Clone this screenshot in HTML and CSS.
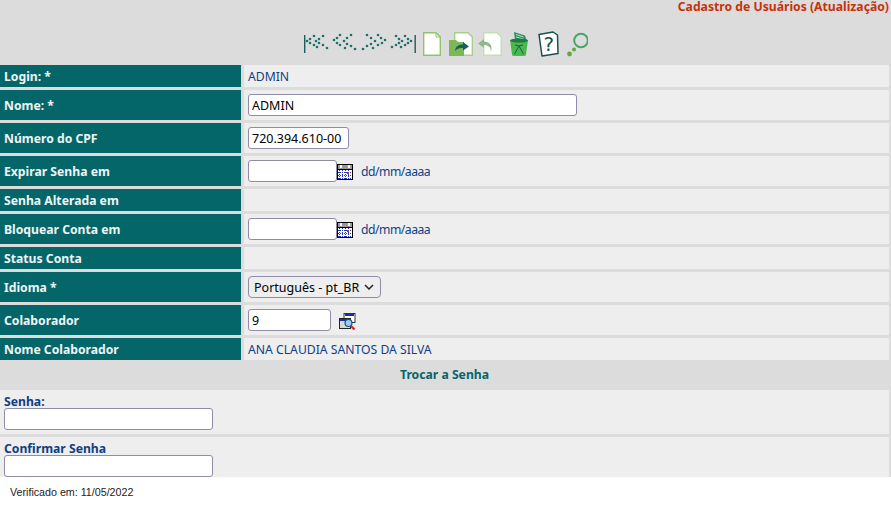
FILE: index.html
```html
<!DOCTYPE html>
<html lang="pt-BR">
<head>
    <meta charset="UTF-8">
    <title>Cadastro de Usuários</title>
    <link rel="stylesheet" href="styles.css">
</head>
<body>

  <div class="page">
    <header class="top">
        <div class="page-title">Cadastro de Usuários (Atualização)</div>
        <div class="toolbar">
            <svg width="115" height="28" viewBox="0 0 115 28">
                <rect x="0" y="5" width="1.4" height="18" fill="#1a5f5c"/>
                <g fill="#1f6f6a">
                    <circle cx="10" cy="6" r="1.3"/><circle cx="6" cy="9" r="1.3"/><circle cx="3" cy="11" r="1.3"/><circle cx="6" cy="13" r="1.3"/><circle cx="10" cy="15" r="1.3"/><circle cx="13" cy="17" r="1.3"/>
                    <circle cx="19" cy="6" r="1.3"/><circle cx="15" cy="9" r="1.3"/><circle cx="12" cy="11" r="1.3"/><circle cx="15" cy="13" r="1.3"/><circle cx="19" cy="15" r="1.3"/><circle cx="23" cy="18" r="1.3"/>
                    <circle cx="36" cy="5" r="1.3"/><circle cx="33" cy="8" r="1.3"/><circle cx="30" cy="10" r="1.3"/><circle cx="33" cy="13" r="1.3"/><circle cx="36" cy="15" r="1.3"/><circle cx="41" cy="18" r="1.3"/>
                    <circle cx="47" cy="5" r="1.3"/><circle cx="43" cy="8" r="1.3"/><circle cx="40" cy="11" r="1.3"/><circle cx="43" cy="14" r="1.3"/><circle cx="47" cy="16" r="1.3"/><circle cx="51" cy="19" r="1.3"/>
                    <circle cx="59" cy="19" r="1.3"/><circle cx="63" cy="16" r="1.3"/><circle cx="67" cy="14" r="1.3"/><circle cx="71" cy="11" r="1.3"/><circle cx="67" cy="8" r="1.3"/><circle cx="63" cy="5" r="1.3"/>
                    <circle cx="69" cy="18" r="1.3"/><circle cx="74" cy="15" r="1.3"/><circle cx="78" cy="13" r="1.3"/><circle cx="81" cy="10" r="1.3"/><circle cx="77" cy="8" r="1.3"/><circle cx="74" cy="5" r="1.3"/>
                    <circle cx="88" cy="17" r="1.3"/><circle cx="92" cy="15" r="1.3"/><circle cx="95" cy="13" r="1.3"/><circle cx="98" cy="11" r="1.3"/><circle cx="95" cy="9" r="1.3"/><circle cx="92" cy="6" r="1.3"/>
                    <circle cx="97" cy="17" r="1.3"/><circle cx="101" cy="15" r="1.3"/><circle cx="104" cy="13" r="1.3"/><circle cx="107" cy="11" r="1.3"/><circle cx="104" cy="9" r="1.3"/><circle cx="101" cy="6" r="1.3"/>
                </g>
                <rect x="110.5" y="5" width="1.4" height="18" fill="#1a5f5c"/>
            </svg>
            <svg width="22" height="28" viewBox="0 0 22 28">
                <path d="M.7 2.7H13L17.3 7V25.3H.7Z" fill="#fff" stroke="#8fc46a" stroke-width="1.4"/>
                <path d="M13 2.7V7H17.3" fill="none" stroke="#8fc46a"/>
            </svg>
            <svg width="24" height="28" viewBox="0 0 24 28">
                <path d="M5.7 2.7H19L23.3 7V25.3H5.700Z" fill="#fff" stroke="#a6d088" stroke-width="1.4"/>
                <path d="M0 10H7L9 12H15V26H0Z" fill="#7cb858"/>
                <path d="M6 21C6.500 16 10 14.500 14 14.500V12L20 16.500L14 20.500V18C11 18 8 18.500 6 21Z" fill="#17605c"/>
            </svg>
            <svg width="28" height="28" viewBox="0 0 28 28">
                <path d="M6.700 2.700H20L24.300 7V25.300H6.700Z" fill="#fff" stroke="#c3dfae" stroke-width="1.400"/>
                <path d="M14 22C14 17 11 15 7 15V18L1 13.500L7 9V11.500C12 11.500 16 15 14 22Z" fill="#8fb98a"/>
            </svg>
            <svg width="25" height="28" viewBox="0 0 25 28">
                <path d="M5 2L16 5.500L17.500 10H6Z" fill="#2f8f6a"/>
                <path d="M7 4.500L14.500 7M7 7L15.500 9.500" stroke="#bfe2b5" stroke-width="1"/>
                <path d="M1 10H19L17 24.500Q16.800 26 15 26H5Q3.200 26 3 24.500Z" fill="#4ab84f"/>
                <ellipse cx="10" cy="10.500" rx="9" ry="2" fill="#1f7a4a"/>
                <path d="M5.500 24L10 16L14.500 24M6 15L10 16L14 15" fill="none" stroke="#17604a" stroke-width="1"/>
            </svg>
            <svg width="25" height="28" viewBox="0 0 25 28">
                <path d="M1 4.500L15 2L19.500 5L20 23.500L4 26Z" fill="#fff" stroke="#17504e" stroke-width="1.500" stroke-linejoin="round"/>
                <text x="5.500" y="21" class="help-mark">?</text>
            </svg>
            <svg width="21" height="28" viewBox="0 0 21 28">
                <circle cx="14" cy="10.500" r="6.800" fill="none" stroke="#45a865" stroke-width="2"/>
                <circle cx="7" cy="19.500" r="2" fill="#63a846"/>
                <circle cx="2.500" cy="24" r="2.400" fill="#63a846"/>
            </svg>
        </div>
    </header>

    <div class="form-grid">
        <div class="label short">Login: *</div>
        <div class="value short">ADMIN</div>

        <div class="label">Nome: *</div>
        <div class="value"><input type="text" class="field field-name" value="ADMIN"></div>

        <div class="label">Número do CPF</div>
        <div class="value"><input type="text" class="field field-cpf" value="720.394.610-00"></div>

        <div class="label">Expirar Senha em</div>
        <div class="value">
            <input type="text" class="field field-date">
            <svg class="cal-icon" width="16" height="16" viewBox="0 0 16 16">
                <rect width="16" height="16" fill="#000"/>
                <rect x="1" y="1" width="14" height="4" fill="#9a9a9a"/>
                <rect x="3" y="1" width="2" height="3" fill="#fff"/>
                <rect x="11" y="1" width="2" height="3" fill="#fff"/>
                <rect x="1" y="6" width="14" height="9" fill="#fff"/>
                <path d="M2.500 6V15M5.500 6V15M8.500 6V15M11.500 6V15M1 8.500H15M1 11.500H15M1 14.500H15" stroke="#2233bb" stroke-dasharray="1 1"/>
                <rect x="10" y="8" width="2" height="2" fill="#e02010"/>
            </svg>
            <span class="hint">dd/mm/aaaa</span>
        </div>

        <div class="label short">Senha Alterada em</div>
        <div class="value short"></div>

        <div class="label">Bloquear Conta em</div>
        <div class="value">
            <input type="text" class="field field-date">
            <svg class="cal-icon" width="16" height="16" viewBox="0 0 16 16">
                <rect width="16" height="16" fill="#000"/>
                <rect x="1" y="1" width="14" height="4" fill="#9a9a9a"/>
                <rect x="3" y="1" width="2" height="3" fill="#fff"/>
                <rect x="11" y="1" width="2" height="3" fill="#fff"/>
                <rect x="1" y="6" width="14" height="9" fill="#fff"/>
                <path d="M2.500 6V15M5.500 6V15M8.500 6V15M11.500 6V15M1 8.500H15M1 11.500H15M1 14.500H15" stroke="#2233bb" stroke-dasharray="1 1"/>
                <rect x="10" y="8" width="2" height="2" fill="#e02010"/>
            </svg>
            <span class="hint">dd/mm/aaaa</span>
        </div>

        <div class="label short">Status Conta</div>
        <div class="value short"></div>

        <div class="label">Idioma *</div>
        <div class="value">
            <div class="select-wrap">
                <select class="field field-lang">
                    <option>Português - pt_BR</option>
                </select>
                <svg class="select-arrow" width="10" height="6" viewBox="0 0 10 6">
                    <path d="M1 1L5 5L9 1" fill="none" stroke="#222" stroke-width="1.500"/>
                </svg>
            </div>
        </div>

        <div class="label">Colaborador</div>
        <div class="value">
            <input type="text" class="field field-colab" value="9">
            <svg class="find-icon" width="17" height="17" viewBox="0 0 17 17">
                <rect x="5" y="0.500" width="11" height="9" fill="#fff" stroke="#333"/>
                <rect x="6" y="1" width="9" height="2" fill="#1a2fa0"/>
                <rect x="0.500" y="5.500" width="11" height="10" fill="#d8d8d8" stroke="#222"/>
                <rect x="1" y="6" width="10" height="2" fill="#1a2fa0"/>
                <circle cx="9.500" cy="10" r="3.500" fill="#8fd0f0" stroke="#1b4f80" stroke-width="1.200"/>
                <path d="M12 13L15.500 16.500" stroke="#e0201a" stroke-width="2.200"/>
            </svg>
        </div>

        <div class="label short">Nome Colaborador</div>
        <div class="value short">ANA CLAUDIA SANTOS DA SILVA</div>
    </div>

    <div class="section-title">Trocar a Senha</div>

    <div class="pass-block">
        <label class="pass-label">Senha:</label>
        <input type="password" class="field field-pass">
    </div>
    <div class="pass-block last">
        <label class="pass-label">Confirmar Senha</label>
        <input type="password" class="field field-pass">
    </div>
  </div>

    <footer class="checked">Verificado em: 11/05/2022</footer>

</body>
</html>
```

FILE: styles.css
```css
body {
    margin: 0;
    padding: 0;
    background-color: #ffffff;
    font-family: "Noto Sans", Verdana, sans-serif;
    font-size: 12.2px;
    color: #0e3f86;
}

.page {
    background-color: #dcdcdc;
    padding-right: 2px;
}

.top {
    height: 65px;
}

.page-title {
    text-align: right;
    color: #c8320a;
    font-weight: bold;
    font-size: 12.2px;
    line-height: 14px;
}

.toolbar {
    display: flex;
    justify-content: center;
    gap: 4px;
    margin-top: 16px;
    padding-left: 2px;
}

.help-mark {
    font-family: "DejaVu Sans", sans-serif;
    font-size: 20px;
    fill: #17504e;
}

.form-grid {
    display: grid;
    grid-template-columns: 241px 1fr;
    gap: 3px;
}

.label {
    background-color: #05666a;
    color: #eef5f5;
    font-weight: bold;
    box-sizing: border-box;
    height: 30px;
    line-height: 30px;
    padding: 1px 0 0 4px;
    font-size: 12.2px;
}

.value {
    background-color: #eeeeee;
    height: 30px;
    padding-left: 4px;
    display: flex;
    align-items: center;
}

.label.short {
    height: 22px;
    line-height: 22px;
}

.value.short {
    height: 22px;
}

.field {
    box-sizing: border-box;
    height: 22px;
    border: 1px solid #8f8ca5;
    border-radius: 3px;
    background-color: #ffffff;
    font-family: "Noto Sans", Verdana, sans-serif;
    font-size: 12.5px;
    color: #000000;
    padding: 0 3px;
    margin: 0;
}

.field-name { width: 329px; }
.field-cpf { width: 101px; }
.field-date { width: 89px; }
.field-colab { width: 83px; }
.field-pass { width: 209px; display: block; }

.select-wrap {
    position: relative;
    display: flex;
}

.field-lang {
    width: 133px;
    background-color: #eeeeee;
    border-radius: 4px;
    padding-left: 5px;
    appearance: none;
}

.select-arrow {
    position: absolute;
    right: 7px;
    top: 8px;
}

.cal-icon { margin-top: 2px; }

.hint { margin-left: 8px; letter-spacing: -0.5px; }

.find-icon { margin-left: 8px; margin-top: 3px; }

.section-title {
    color: #05666a;
    font-weight: bold;
    font-size: 12.2px;
    text-align: center;
    height: 30px;
    line-height: 30px;
}

.pass-block {
    background-color: #eeeeee;
    padding: 4px 4px 4px;
    margin-bottom: 3px;
}

.pass-block.last {
    padding-bottom: 0;
    margin-bottom: 0;
}

.pass-label {
    display: block;
    height: 14px;
    line-height: 16px;
    font-weight: bold;
    font-size: 12.2px;
}

.checked {
    font-family: "Liberation Sans", Arial, sans-serif;
    font-size: 10.7px;
    color: #222222;
    padding: 9px 0 0 10px;
}
```
